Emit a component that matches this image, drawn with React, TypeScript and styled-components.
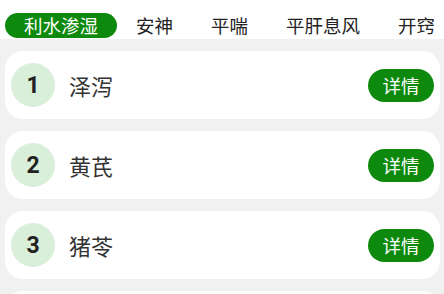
import React, { useState } from 'react';
import styled, { createGlobalStyle } from 'styled-components';

const GlobalStyle = createGlobalStyle`
    html, body {
        margin: 0;
        padding: 0;
        background: #f1f1f1;
        font-family: "Noto Sans CJK SC", "Noto Sans", sans-serif;
        overflow: hidden;
    }
`

const tabs = ['利水渗湿', '安神', '平喘', '平肝息风', '开窍']

const herbs = [
    {no: 1, name: '泽泻'},
    {no: 2, name: '黄芪'},
    {no: 3, name: '猪苓'},
    {no: 4, name: '茯苓'},
]

export default function App() {
    const [active, setActive] = useState(0)

    return (
        <>
            <GlobalStyle/>
            <Page>
                <TabBar>
                    {tabs.map((t, i) => (
                        <Tab key={t} $active={i === active} onClick={() => setActive(i)}>{t}</Tab>
                    ))}
                </TabBar>

                <List>
                    {herbs.map(h => (
                        <Card key={h.no}>
                            <Badge>{h.no}</Badge>
                            <Name>{h.name}</Name>
                            <DetailButton>详情</DetailButton>
                        </Card>
                    ))}
                </List>
            </Page>
        </>
    );
}

const Page = styled.div`
    width: 444px;
    height: 294px;
    overflow: hidden;
`

const TabBar = styled.div`
    display: flex;
    background: #ffffff;
    padding: 13px 0 1px 5px;
    white-space: nowrap;
    overflow: hidden;
`

const Tab = styled.div<{ $active: boolean }>`
    flex-shrink: 0;
    height: 25px;
    line-height: 25px;
    padding: 0 19px;
    border-radius: 13px;
    font-size: 18.5px;
    color: ${p => p.$active ? '#ffffff' : '#222222'};
    background: ${p => p.$active ? '#0d8a0d' : 'transparent'};
`

const List = styled.div`
    display: flex;
    flex-direction: column;
    gap: 12px;
    padding: 12px 4px 0 5px;
`

const Card = styled.div`
    display: flex;
    align-items: center;
    height: 68px;
    flex-shrink: 0;
    padding: 0 6px 0 6px;
    background: #ffffff;
    border-radius: 18px;
    box-sizing: border-box;
`

const Badge = styled.div`
    width: 44px;
    height: 44px;
    border-radius: 50%;
    background: #d9efda;
    display: flex;
    align-items: center;
    justify-content: center;
    font-family: Roboto, "Noto Sans", sans-serif;
    font-weight: 700;
    font-size: 23px;
    color: #222222;
`

const Name = styled.div`
    flex: 1;
    margin-left: 14px;
    font-size: 22px;
    color: #333333;
`

const DetailButton = styled.button`
    width: 66px;
    height: 33px;
    border: none;
    border-radius: 17px;
    background: #0d8a0d;
    color: #ffffff;
    font-family: "Noto Sans CJK SC", sans-serif;
    font-size: 18.5px;
    padding: 0;
`
